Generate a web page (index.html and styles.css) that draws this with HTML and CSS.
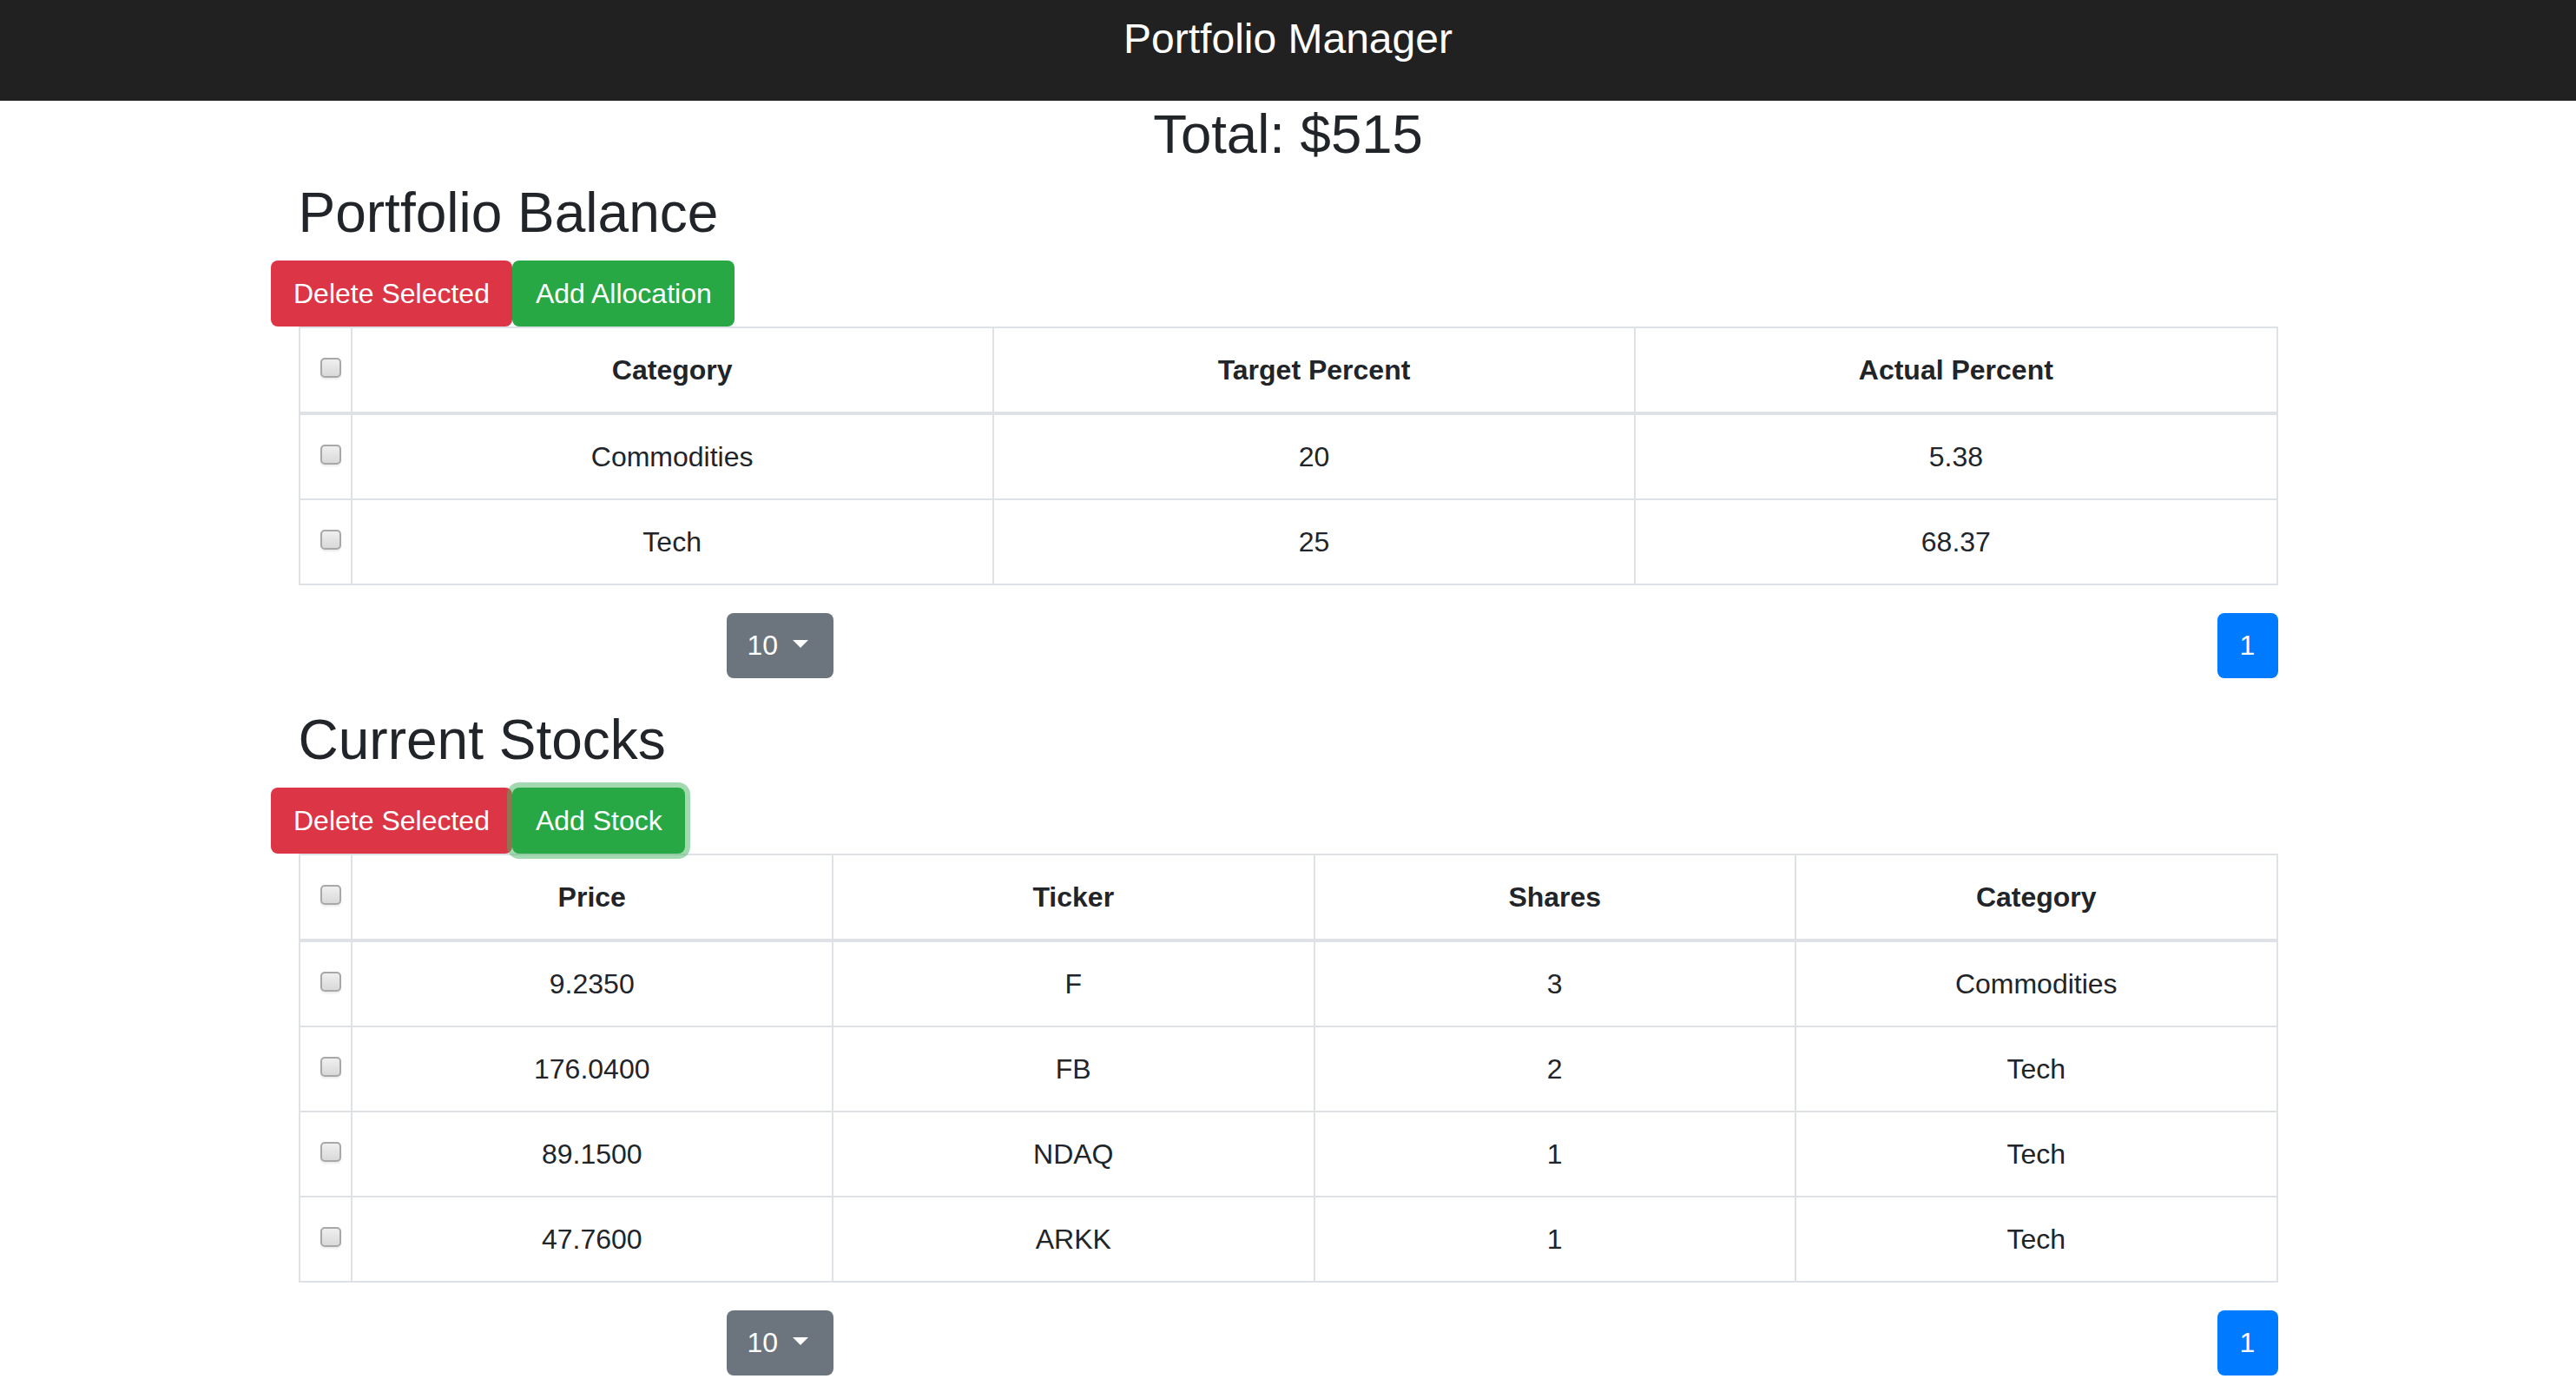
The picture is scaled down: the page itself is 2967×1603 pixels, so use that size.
FILE: index.html
```html
<!DOCTYPE html>
<html lang="en">
<head>
<meta charset="utf-8">
<title>Portfolio Manager</title>
<link rel="stylesheet" href="styles.css">
</head>
<body>
<header class="navbar"><span class="brand">Portfolio Manager</span></header>
<h2 class="total">Total: $515</h2>
<main class="container">
  <section class="panel">
    <h2 class="section-title">Portfolio Balance</h2>
    <div class="toolbar">
      <button class="btn btn-danger">Delete Selected</button><button class="btn btn-success">Add Allocation</button>
    </div>
    <table class="data-table">
      <colgroup><col class="col-check"><col><col><col></colgroup>
      <thead>
        <tr><th class="check-cell"><input type="checkbox" class="row-check"></th><th>Category</th><th>Target Percent</th><th>Actual Percent</th></tr>
      </thead>
      <tbody>
        <tr><td class="check-cell"><input type="checkbox" class="row-check"></td><td>Commodities</td><td>20</td><td>5.38</td></tr>
        <tr><td class="check-cell"><input type="checkbox" class="row-check"></td><td>Tech</td><td>25</td><td>68.37</td></tr>
      </tbody>
    </table>
    <div class="pager">
      <button class="btn btn-secondary size-toggle">10 <span class="caret"></span></button>
      <ul class="pagination"><li><a class="page-link">1</a></li></ul>
    </div>
  </section>

  <section class="panel">
    <h2 class="section-title">Current Stocks</h2>
    <div class="toolbar">
      <button class="btn btn-danger">Delete Selected</button><button class="btn btn-success is-focused">Add Stock</button>
    </div>
    <table class="data-table">
      <colgroup><col class="col-check"><col><col><col><col></colgroup>
      <thead>
        <tr><th class="check-cell"><input type="checkbox" class="row-check"></th><th>Price</th><th>Ticker</th><th>Shares</th><th>Category</th></tr>
      </thead>
      <tbody>
        <tr><td class="check-cell"><input type="checkbox" class="row-check"></td><td>9.2350</td><td>F</td><td>3</td><td>Commodities</td></tr>
        <tr><td class="check-cell"><input type="checkbox" class="row-check"></td><td>176.0400</td><td>FB</td><td>2</td><td>Tech</td></tr>
        <tr><td class="check-cell"><input type="checkbox" class="row-check"></td><td>89.1500</td><td>NDAQ</td><td>1</td><td>Tech</td></tr>
        <tr><td class="check-cell"><input type="checkbox" class="row-check"></td><td>47.7600</td><td>ARKK</td><td>1</td><td>Tech</td></tr>
      </tbody>
    </table>
    <div class="pager">
      <button class="btn btn-secondary size-toggle">10 <span class="caret"></span></button>
      <ul class="pagination"><li><a class="page-link">1</a></li></ul>
    </div>
  </section>
</main>
</body>
</html>
```

FILE: styles.css
```css
* { box-sizing: border-box; }

body {
  margin: 0;
  font-family: "Liberation Sans", Arial, sans-serif;
  color: #212529;
  background: #fff;
}

.navbar {
  height: 116px;
  background: #212121;
  text-align: center;
  padding-top: 17px;
}

.brand {
  color: #fff;
  font-size: 48px;
  line-height: 56px;
}

.total {
  margin: 0;
  font-size: 63.5px;
  line-height: 1.2;
  font-weight: normal;
  text-align: center;
}

.container {
  width: 2280px;
  margin: 0 auto;
}

.section-title {
  font-size: 64px;
  line-height: 1.2;
  font-weight: normal;
  margin: 15.2px 0 15.8px;
}

.panel + .panel .section-title {
  margin-top: 33.4px;
}

.toolbar {
  display: flex;
  margin-left: -32px;
}

.btn {
  font-family: inherit;
  font-size: 32px;
  height: 76px;
  line-height: 76px;
  padding: 0 26.5px;
  border: 0;
  border-radius: 8px;
  color: #fff;
  cursor: pointer;
}

.btn-danger { background: #dc3545; }
.btn-success { background: #28a745; }
.btn-secondary { background: #6c757d; }

.is-focused {
  position: relative;
  z-index: 1;
  box-shadow: 0 0 0 6px rgba(72, 180, 97, 0.5);
}

.data-table {
  width: 100%;
  border-collapse: collapse;
  table-layout: fixed;
  border: 2px solid #dee2e6;
}

.col-check { width: 60px; }

.data-table th,
.data-table td {
  border: 2px solid #dee2e6;
  padding: 24px 12px;
  line-height: 48px;
  font-size: 32px;
  text-align: center;
  vertical-align: top;
}

.data-table thead th {
  border-bottom-width: 4px;
  font-weight: bold;
}

.data-table .check-cell {
  text-align: left;
  padding: 24px 0 24px 23px;
}

.row-check {
  -webkit-appearance: none;
  appearance: none;
  display: block;
  margin: 10px 0 0;
  width: 24px;
  height: 23px;
  border: 2px solid #a8a8a8;
  border-radius: 5px;
  background: linear-gradient(#efefef, #d9d9d9);
  box-shadow: 0 2px 2px rgba(0, 0, 0, 0.08);
}

.pager {
  display: flex;
  justify-content: space-between;
  align-items: center;
  margin-top: 32px;
  padding-left: 493px;
}

.size-toggle {
  width: 123px;
  height: 75px;
  line-height: 75px;
  padding: 0 0 0 24px;
  text-align: left;
  white-space: nowrap;
}

.caret {
  display: inline-block;
  margin-left: 0.255em;
  vertical-align: 0.255em;
  border-top: 0.3em solid #fff;
  border-right: 0.3em solid transparent;
  border-left: 0.3em solid transparent;
  border-bottom: 0;
}

.pagination {
  list-style: none;
  margin: 0;
  padding: 0;
  display: flex;
}

.page-link {
  display: block;
  width: 70px;
  height: 75px;
  line-height: 75px;
  text-align: center;
  background: #007bff;
  color: #fff;
  border-radius: 8px;
  font-size: 32px;
  text-decoration: none;
}
```
